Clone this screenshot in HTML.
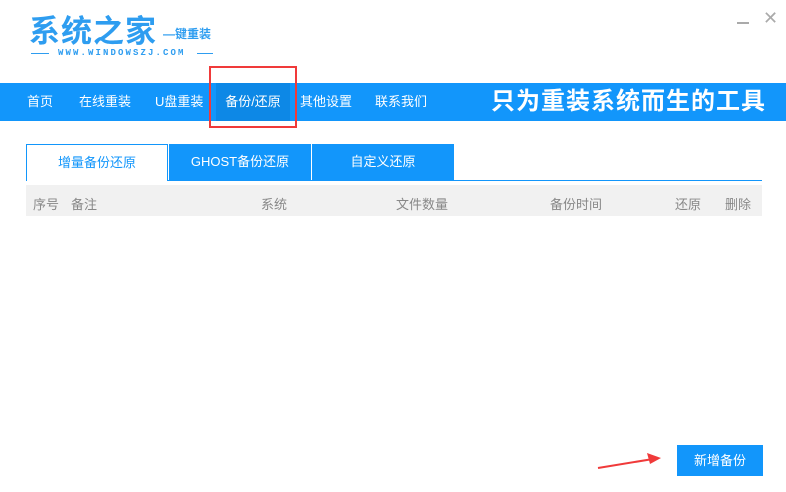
<!DOCTYPE html>
<html><head><meta charset="utf-8"><style>
*{margin:0;padding:0;box-sizing:border-box}
body{width:786px;height:492px;background:#fff;position:relative;overflow:hidden;font-family:"Liberation Sans","Noto Sans CJK SC",sans-serif}
.a{position:absolute;white-space:nowrap}
.nav{position:absolute;left:0;top:83px;width:786px;height:38px;background:#1296fb}
.ni{position:absolute;top:0;height:38px;line-height:38px;color:#fff;font-size:13px}
.th{position:absolute;top:194px;font-size:13px;color:#888}
</style></head><body>
<div class="a" style="left:29px;top:6px;font-size:31px;color:#2e9df0;font-weight:bold;letter-spacing:1px">系统之家</div>
<div class="a" style="left:163px;top:25px;font-size:12px;color:#2e9df0;font-weight:bold">—键重装</div>
<div class="a" style="left:31px;top:53px;width:18px;height:1px;background:#2e9df0"></div>
<div class="a" style="left:197px;top:53px;width:16px;height:1px;background:#2e9df0"></div>
<div class="a" style="left:58px;top:48px;font-size:9px;color:#2e9df0;font-family:'Liberation Mono',monospace;font-weight:bold;letter-spacing:2.1px">WWW.WINDOWSZJ.COM</div>
<div class="a" style="left:737px;top:22px;width:12px;height:2px;background:#aaa"></div>
<div class="a" style="left:763px;top:8px;font-size:18px;color:#aaa">✕</div>
<div class="nav">
<div class="ni" style="left:27px">首页</div>
<div class="ni" style="left:79px">在线重装</div>
<div class="ni" style="left:155px">U盘重装</div>
<div class="ni" style="left:216px;width:74px;background:#0d88e6;text-align:center">备份/还原</div>
<div class="ni" style="left:300px">其他设置</div>
<div class="ni" style="left:375px">联系我们</div>
<div class="ni" style="left:491px;font-size:24px;font-weight:bold;letter-spacing:1px">只为重装系统而生的工具</div>
</div>
<div class="a" style="left:209px;top:66px;width:88px;height:62px;border:2px solid #f03a3a"></div>
<div class="a" style="left:26px;top:180px;width:736px;height:1px;background:#1296fb"></div>
<div class="a" style="left:26px;top:144px;width:142px;height:37px;border:1px solid #1296fb;border-bottom:none;background:#fff;color:#1296fb;font-size:13px;text-align:center;line-height:36px">增量备份还原</div>
<div class="a" style="left:169px;top:144px;width:142px;height:36px;background:#1296fb;color:#fff;font-size:13px;text-align:center;line-height:36px">GHOST备份还原</div>
<div class="a" style="left:312px;top:144px;width:142px;height:36px;background:#1296fb;color:#fff;font-size:13px;text-align:center;line-height:36px">自定义还原</div>
<div class="a" style="left:26px;top:185px;width:736px;height:31px;background:#f1f1f1"></div>
<div class="th" style="left:33px">序号</div>
<div class="th" style="left:71px">备注</div>
<div class="th" style="left:261px">系统</div>
<div class="th" style="left:396px">文件数量</div>
<div class="th" style="left:550px">备份时间</div>
<div class="th" style="left:675px">还原</div>
<div class="th" style="left:725px">删除</div>
<div class="a" style="left:677px;top:445px;width:86px;height:31px;background:#1296fb;color:#fff;font-size:13px;text-align:center;line-height:31px">新增备份</div>
<svg class="a" style="left:595px;top:450px" width="70" height="22"><line x1="3" y1="18" x2="58" y2="9" stroke="#f03a3a" stroke-width="2"/><polygon points="66,8 52,3 55,14" fill="#f03a3a"/></svg>
</body></html>
